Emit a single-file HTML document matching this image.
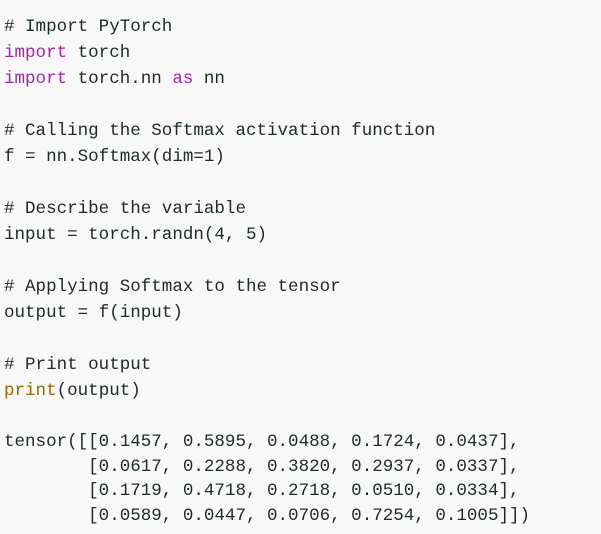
<!DOCTYPE html>
<html><head><style>
html,body{margin:0;padding:0;background:#f8f8f8;width:601px;height:534px;overflow:hidden}
pre{margin:0;position:absolute;left:4px;font-family:"Liberation Mono",monospace;font-size:17.55px;color:#1f2a2a;white-space:pre}
.a{top:14px;line-height:26px}
.b{top:430px;line-height:24.5px}
.k{color:#a626a4}.p{color:#986801}
</style></head><body>
<pre class="a"># Import PyTorch
<span class="k">import</span> torch
<span class="k">import</span> torch.nn <span class="k">as</span> nn

# Calling the Softmax activation function
f = nn.Softmax(dim=1)

# Describe the variable
input = torch.randn(4, 5)

# Applying Softmax to the tensor
output = f(input)

# Print output
<span class="p">print</span>(output)</pre>
<pre class="b">tensor([[0.1457, 0.5895, 0.0488, 0.1724, 0.0437],
        [0.0617, 0.2288, 0.3820, 0.2937, 0.0337],
        [0.1719, 0.4718, 0.2718, 0.0510, 0.0334],
        [0.0589, 0.0447, 0.0706, 0.7254, 0.1005]])</pre>
</body></html>
